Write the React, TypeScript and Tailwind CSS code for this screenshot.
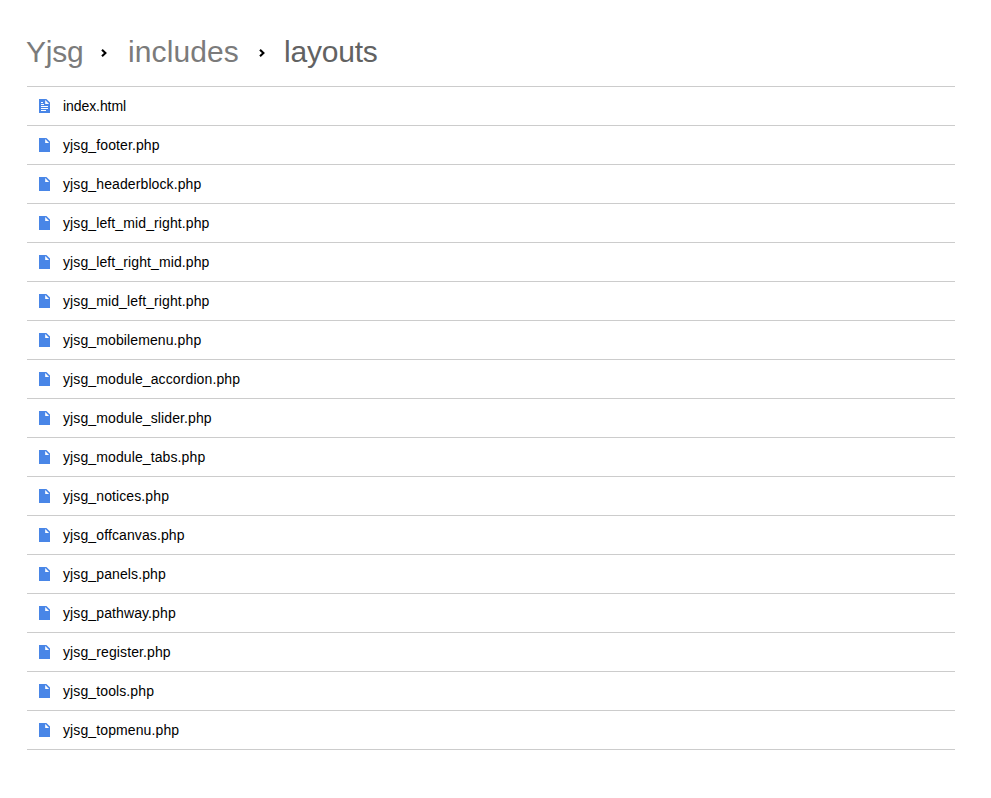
const files = ['index.html','yjsg_footer.php','yjsg_headerblock.php','yjsg_left_mid_right.php','yjsg_left_right_mid.php','yjsg_mid_left_right.php','yjsg_mobilemenu.php','yjsg_module_accordion.php','yjsg_module_slider.php','yjsg_module_tabs.php','yjsg_notices.php','yjsg_offcanvas.php','yjsg_panels.php','yjsg_pathway.php','yjsg_register.php','yjsg_tools.php','yjsg_topmenu.php'];

function FileIcon({ text }: { text: boolean }) {
  return (
    <svg width="11" height="14" viewBox="0 0 11 14" className="shrink-0">
      <path d="M0 0h7.4L11 3.6V14H0z" fill="#4986e7" />
      <path d="M6.2 1v3.9h3.9z" fill="#fff" />
      {text && <path d="M2 3h2v1H2zM2 5h3v1H2zM2 7h7v1H2zM2 9h7v1H2zM2 11h5v1H2z" fill="#fff" />}
    </svg>
  );
}

function Chevron() {
  return (
    <svg width="6" height="8" viewBox="0 0 6 8" fill="none" className="mt-[3px] shrink-0">
      <path d="M1 .8L4.4 4 1 7.2" stroke="#000" strokeWidth="2.1" />
    </svg>
  );
}

export default function App() {
  return (
    <main className="h-[798px] bg-white pl-[27px] pr-9 font-['Liberation_Sans',Arial,sans-serif]">
      <nav className="-ml-px flex h-[86px] items-center pt-4 text-[30px] text-[#7b7b7b]">
        <span className="w-[75px] tracking-[-0.2px]">Yjsg</span>
        <Chevron />
        <span className="ml-[21px] w-[131px] tracking-[0.1px]">includes</span>
        <Chevron />
        <span className="ml-[19px] tracking-[-0.2px] text-[#626262]">layouts</span>
      </nav>
      <ul className="border-t border-[#ccc]">
        {files.map((name) => (
          <li key={name} className="flex h-[39px] items-center gap-[13px] border-b border-[#ccc] pl-3 text-[14px] text-black">
            <FileIcon text={name === 'index.html'} />
            <span className={name === 'index.html' ? 'tracking-[-0.08px]' : 'tracking-[0.11px]'}>{name}</span>
          </li>
        ))}
      </ul>
    </main>
  );
}
